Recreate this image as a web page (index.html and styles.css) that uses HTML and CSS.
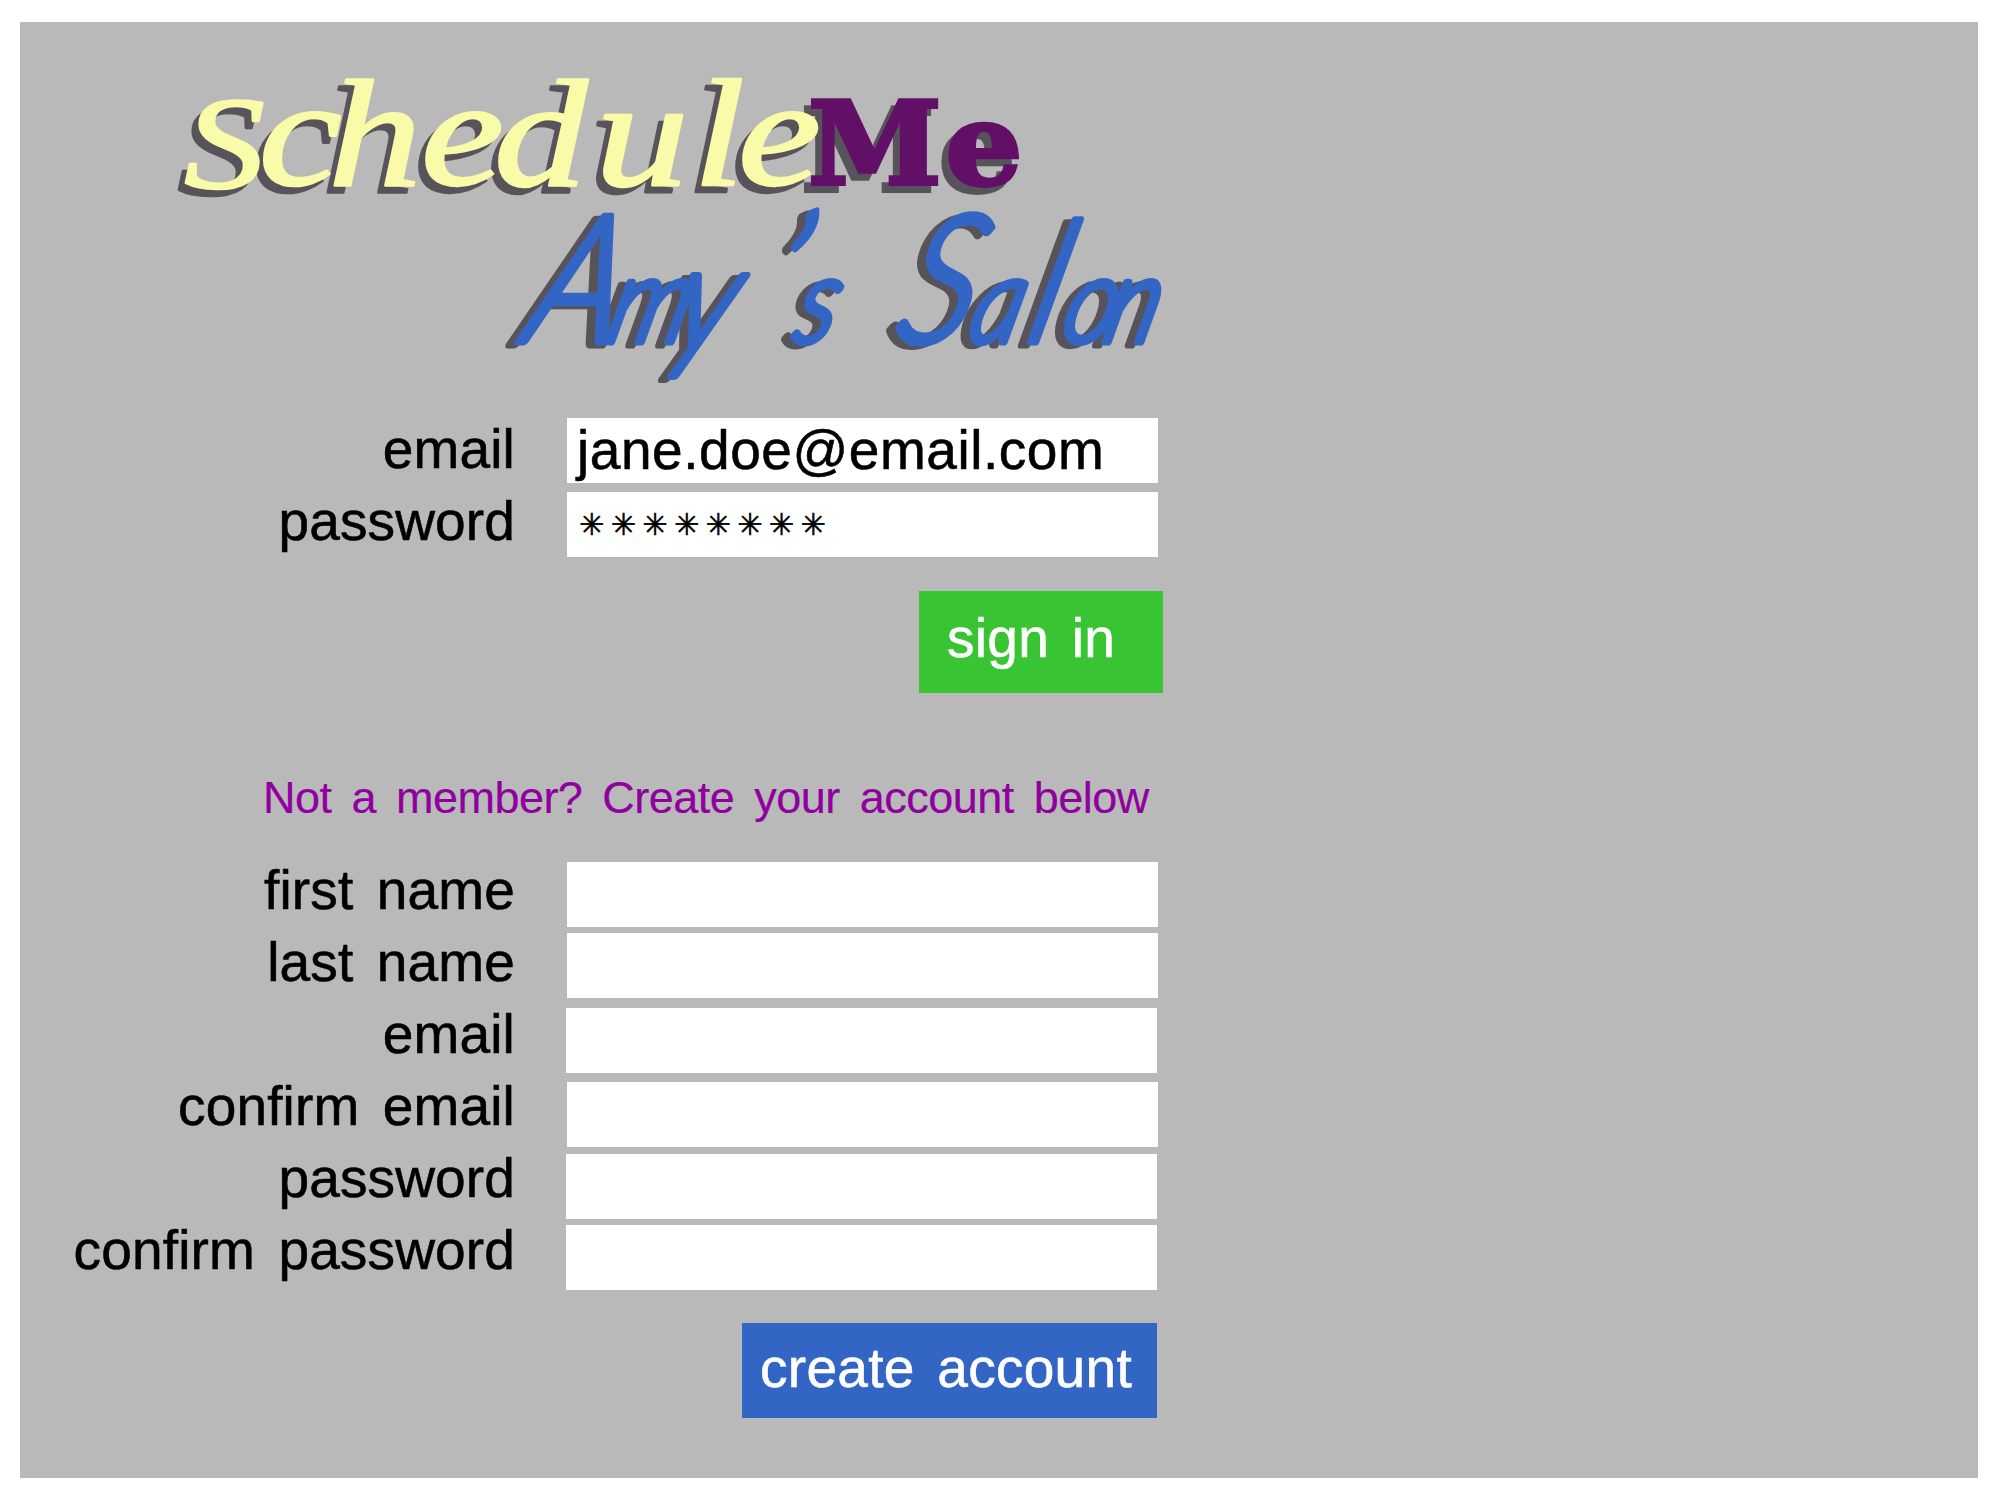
FILE: index.html
```html
<!DOCTYPE html>
<html lang="en">
<head>
<meta charset="utf-8">
<title>ScheduleMe - Amy's Salon</title>
<link rel="stylesheet" href="styles.css">
</head>
<body>
<main class="panel">
  <svg class="logo" width="1158" height="396" viewBox="20 22 1158 396" role="img" aria-label="ScheduleMe Amy’s Salon">
    <g class="brand">
      <text class="schedule" transform="translate(0 185) scale(1.22 1)"><tspan class="initial" x="151" y="3">S</tspan><tspan x="212 269 345 405 488 568 605" y="0">chedule</tspan></text>
      <text class="me" transform="translate(808 184) scale(1.05 1)" x="0 131" y="0">Me</text>
    </g>
    <g class="salon">
      <text transform="translate(0 342) scale(0.85 1) skewX(-17)"><tspan class="cap" x="613">A</tspan><tspan class="low" x="710">m</tspan><tspan class="tail" x="788" y="8">y</tspan><tspan class="cap" x="889" y="0">’</tspan><tspan class="low" x="930">s</tspan> <tspan class="cap" x="1049">S</tspan><tspan class="low" x="1136">a</tspan><tspan class="tall" x="1204">l</tspan><tspan class="low" x="1245 1294">on</tspan></text>
    </g>
  </svg>

  <form class="form sign-in">
    <div class="labels"><label>email</label><label>password</label></div>
    <div class="fields">
      <div class="field email">jane.doe@email.com</div>
      <div class="field mask">✳✳✳✳✳✳✳✳</div>
    </div>
  </form>
  <button class="btn btn-sign">sign in</button>

  <p class="invite">Not a member? Create your account below</p>

  <form class="form sign-up">
    <div class="labels">
      <label>first name</label><label>last name</label><label>email</label>
      <label>confirm email</label><label>password</label><label>confirm password</label>
    </div>
    <div class="fields">
      <div class="field"></div>
      <div class="field second"></div>
      <div class="field third"></div>
      <div class="field fourth"></div>
      <div class="field fifth"></div>
      <div class="field sixth"></div>
    </div>
  </form>
  <button class="btn btn-create">create account</button>
</main>
</body>
</html>
```
FILE: styles.css
```css
* { box-sizing: border-box; }
body {
  margin: 0;
  padding: 22px 22px 22px 20px;
  background: #fff;
  font-family: "Liberation Sans", Arial, sans-serif;
  font-size: 55px;
  letter-spacing: 0.15px;
  word-spacing: 8px;
  color: #000;
  -webkit-text-stroke: 0.6px currentColor;
}
.panel {
  display: flex;
  flex-direction: column;
  align-items: flex-start;
  width: 1958px;
  height: 1456px;
  background: #b9b9b9;
}
.logo {
  display: block;
  flex: none;
  overflow: visible;
  letter-spacing: 0;
  word-spacing: 0;
}
.brand { filter: drop-shadow(-7px 7px 0 #58535a); }
.salon { filter: drop-shadow(-9px 3px 0 #58535a); }
.schedule {
  font: italic 153px "Liberation Serif", serif;
  fill: #fafba8;
  stroke: #fafba8;
  stroke-width: 2.5px;
  stroke-linejoin: round;
}
.initial { font-size: 132px; }
.me {
  font: bold 115px "DejaVu Serif", serif;
  fill: #620f68;
  stroke: #620f68;
  stroke-width: 4px;
}
.salon text {
  font-family: Lato, sans-serif;
  font-style: italic;
  font-weight: 300;
  fill: #3366c4;
  stroke: #3366c4;
  stroke-width: 7px;
  stroke-linejoin: round;
}
.cap { font-size: 178px; }
.tall { font-size: 168px; }
.low { font-size: 120px; }
.tail { font-size: 150px; }

.form { display: flex; gap: 52px; }
.labels {
  display: flex;
  flex-direction: column;
  width: 495px;
  text-align: right;
}
.labels label { height: 72px; line-height: 72px; white-space: nowrap; }
.sign-in .labels { margin-top: -5px; }
.sign-up .labels { margin-top: -8px; }
.field {
  width: 591px;
  height: 65px;
  background: #fff;
  white-space: nowrap;
}
.email { padding-left: 10px; line-height: 65px; letter-spacing: 0.55px; }
.mask {
  margin-top: 9px;
  padding-left: 12px;
  font: 30px/65px "DejaVu Sans", sans-serif;
  letter-spacing: 6.5px;
}
.second { margin-top: 6px; }
.third { margin: 10px 0 0 -1px; }
.fourth { margin-top: 9px; }
.fifth { margin: 7px 0 0 -1px; }
.sixth { margin: 6px 0 0 -1px; }
.sign-in { height: 139px; }
.sign-up { height: 428px; }

.btn {
  flex: none;
  border: 0;
  color: #fff;
  font: inherit;
  letter-spacing: 0.3px;
  word-spacing: 7px;
  text-align: left;
  white-space: nowrap;
}
.btn-sign {
  width: 244px;
  height: 102px;
  margin: 34px 0 0 899px;
  padding: 0 0 8px 28px;
  background: #38c433;
}
.btn-create {
  width: 415px;
  height: 95px;
  margin: 33px 0 0 722px;
  padding: 0 0 6px 18px;
  background: #3366c4;
}
.invite {
  height: 60px;
  margin: 75px 0 34px 243px;
  font-size: 45px;
  line-height: 60px;
  letter-spacing: -0.52px;
  -webkit-text-stroke-width: 0.2px;
  color: #90009f;
  white-space: nowrap;
}
```
